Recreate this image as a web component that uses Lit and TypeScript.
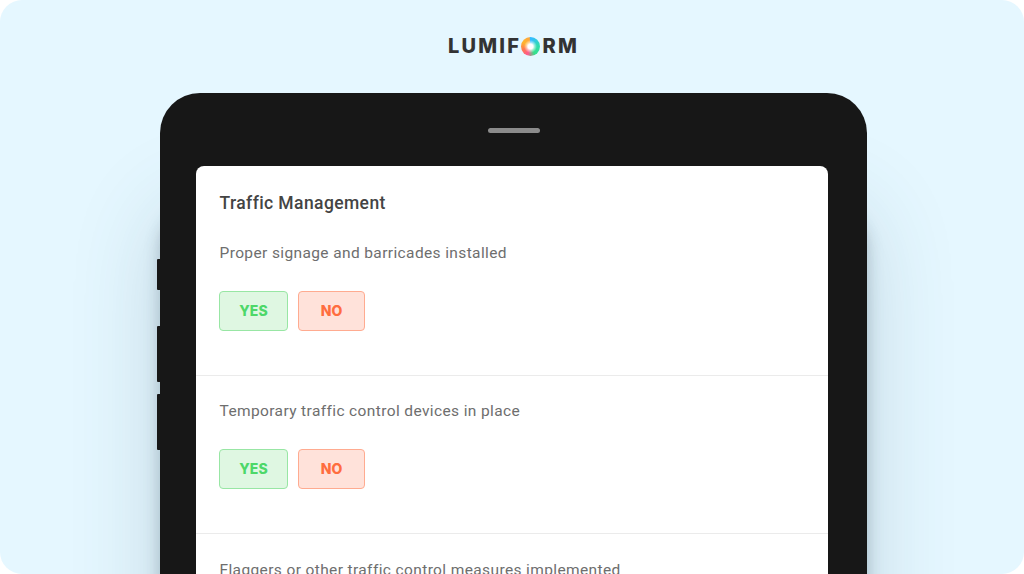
import { LitElement, html, css } from "lit";
import { customElement } from "lit/decorators.js";

const answered = [
  "Proper signage and barricades installed",
  "Temporary traffic control devices in place",
];

@customElement("app-root")
export class AppRoot extends LitElement {
  static styles = css`
    :host { display: block; width: 1024px; height: 574px; overflow: hidden; background: #fff; font-family: "Roboto", "Liberation Sans", sans-serif; }
    .page { height: 574px; box-sizing: border-box; background: #e5f7ff; border-radius: 22px; overflow: hidden; display: flex; flex-direction: column; align-items: center; padding-top: 36px; }
    .logo { display: flex; align-items: center; height: 20px; margin-left: 3px; font-family: "Inter", sans-serif; font-weight: 800; font-size: 20px; letter-spacing: 2.2px; color: #333; line-height: 20px; }
    .ring { position: relative; width: 19px; height: 19px; margin: 0 3px 0 -0.5px; border-radius: 50%; background: conic-gradient(#35bcff 10deg, #2fdcb0 80deg, #35e08a 150deg, #ff5a8e 200deg, #ff7a4d 250deg, #ffb52e 300deg, #ffa83c 350deg, #35bcff 370deg); }
    .ring::after { content: ""; position: absolute; inset: 0; border-radius: 50%; background: radial-gradient(circle, #fff 0 2.5px, rgba(255,255,255,.55) 4px, rgba(255,255,255,0) 6.5px); }
    .device { position: relative; left: 1px; box-sizing: border-box; width: 707px; margin-top: 37px; flex: none; height: 560px; background: #171717; border-radius: 40px 40px 0 0; padding: 73px 39px 0 36px; box-shadow: 0 115px 90px rgba(50, 85, 105, 0.2), 0 115px 16px rgba(50, 70, 85, 0.28); }
    .speaker { position: absolute; top: 35px; left: 328px; width: 52px; height: 5px; border-radius: 3px; background: #8b8b8b; }
    .btn { position: absolute; left: -3px; width: 3px; background: #171717; border-radius: 1px 0 0 1px; }
    .b1 { top: 166px; height: 31px; }
    .b2 { top: 233px; height: 56px; }
    .b3 { top: 301px; height: 56px; }
    .screen { background: #fff; border-radius: 8px 8px 0 0; height: 500px; }
    .title { padding: 26px 24px 0; height: 22px; line-height: 22px; font-size: 17.5px; font-weight: 500; color: #444; letter-spacing: 0.4px; }
    .q { padding: 0 24px; height: 158px; box-sizing: border-box; border-bottom: 1px solid #ebebeb; }
    .q.first { height: 162px; }
    .q.open { border-bottom: 0; }
    .q.open .label { padding-top: 26px; }
    .label { padding-top: 25px; font-size: 15.5px; line-height: 21px; color: #6e6e6e; letter-spacing: 0.38px; white-space: nowrap; }
    .first .label { padding-top: 29px; }
    .actions { display: flex; gap: 10px; margin-top: 27px; margin-left: -0.5px; }
    .choice { box-sizing: border-box; width: 69px; height: 40px; padding-bottom: 2px; display: flex; align-items: center; justify-content: center; border-radius: 4px; font-size: 14px; font-weight: 800; font-family: "Inter", sans-serif; }
    .yes { background: #dff7e2; border: 1px solid #98e6a4; color: #4dd869; }
    .no { width: 67px; background: #ffe2da; border: 1px solid #ffab90; color: #ff6d3f; }
  `;

  render() {
    return html`<div class="page">
      <div class="logo">LUMIF<span class="ring"></span>RM</div>
      <div class="device">
        <span class="btn b1"></span><span class="btn b2"></span><span class="btn b3"></span>
        <span class="speaker"></span>
        <div class="screen">
          <div class="title">Traffic Management</div>
          ${answered.map(
            (q, i) => html`<div class="q ${i === 0 ? "first" : ""}">
              <div class="label">${q}</div>
              <div class="actions">
                <div class="choice yes">YES</div>
                <div class="choice no">NO</div>
              </div>
            </div>`
          )}
          <div class="q open"><div class="label">Flaggers or other traffic control measures implemented</div></div>
        </div>
      </div>
    </div>`;
  }
}
